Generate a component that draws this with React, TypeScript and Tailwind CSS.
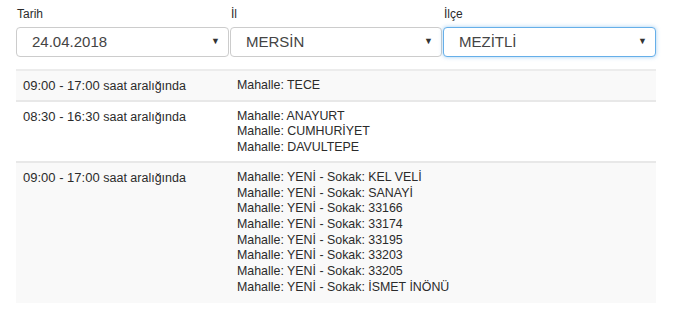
import React from 'react';

const rows = [
  { time: '09:00 - 17:00', items: ['Mahalle: TECE'], alt: true },
  { time: '08:30 - 16:30', items: ['Mahalle: ANAYURT', 'Mahalle: CUMHURİYET', 'Mahalle: DAVULTEPE'], alt: false },
  {
    time: '09:00 - 17:00',
    items: ['KEL VELİ', 'SANAYİ', '33166', '33174', '33195', '33203', '33205', 'İSMET İNÖNÜ'].map(
      s => 'Mahalle: YENİ - Sokak: ' + s
    ),
    alt: true,
  },
];

function SelectBox({ value, focused }: { value: string; focused?: boolean }) {
  return (
    <div
      className={
        'flex items-center justify-between h-[30px] rounded-[4px] pl-[15px] pr-[8px] bg-white border ' +
        (focused ? 'border-[#66afe9] shadow-[0_0_4px_rgba(102,175,233,0.6)]' : 'border-[#cccccc]')
      }
    >
      <span className="text-[15px] text-[#444]">{value}</span>
      <span className="text-[9px] text-[#333]">▼</span>
    </div>
  );
}

export default function App() {
  const filters = [
    { label: 'Tarih', value: '24.04.2018' },
    { label: 'İl', value: 'MERSİN' },
    { label: 'İlçe', value: 'MEZİTLİ', focused: true },
  ];

  return (
    <div className="w-[680px] h-[315px] bg-white pl-[16px] pt-[6px] text-[#2b2b2b] font-['Liberation_Sans',Arial,sans-serif]">
      <div className="w-[640px] grid grid-cols-[214px_213px_213px]">
        {filters.map((f, i) => (
          <div key={i} className={'flex flex-col ' + (i === 2 ? '' : 'pr-[1px]')}>
            <label className="text-[12px] leading-[16px] mb-[5px] pl-[1px]">{f.label}</label>
            <SelectBox value={f.value} focused={f.focused} />
          </div>
        ))}
      </div>

      <div className="w-[640px] mt-[12px] border-t-2 border-[#ececec]">
        {rows.map((r, i) => {
          const last = i === rows.length - 1;
          return (
            <div
              key={i}
              className={
                'grid grid-cols-[214px_1fr] pt-[7px] leading-[15.7px] ' +
                (r.alt ? 'bg-[#f9f9f9] ' : 'bg-white ') +
                (last ? 'pb-[8px]' : 'pb-[5px] border-b-2 border-[#e8e8e8]')
              }
            >
              <div className="pl-[7px] text-[13px]">
                {r.time} <span className="text-[12.5px]">saat aralığında</span>
              </div>
              <div className="pl-[7px] flex flex-col text-[12.4px]">
                {r.items.map((it, j) => (
                  <span key={j}>{it}</span>
                ))}
              </div>
            </div>
          );
        })}
      </div>
    </div>
  );
}
